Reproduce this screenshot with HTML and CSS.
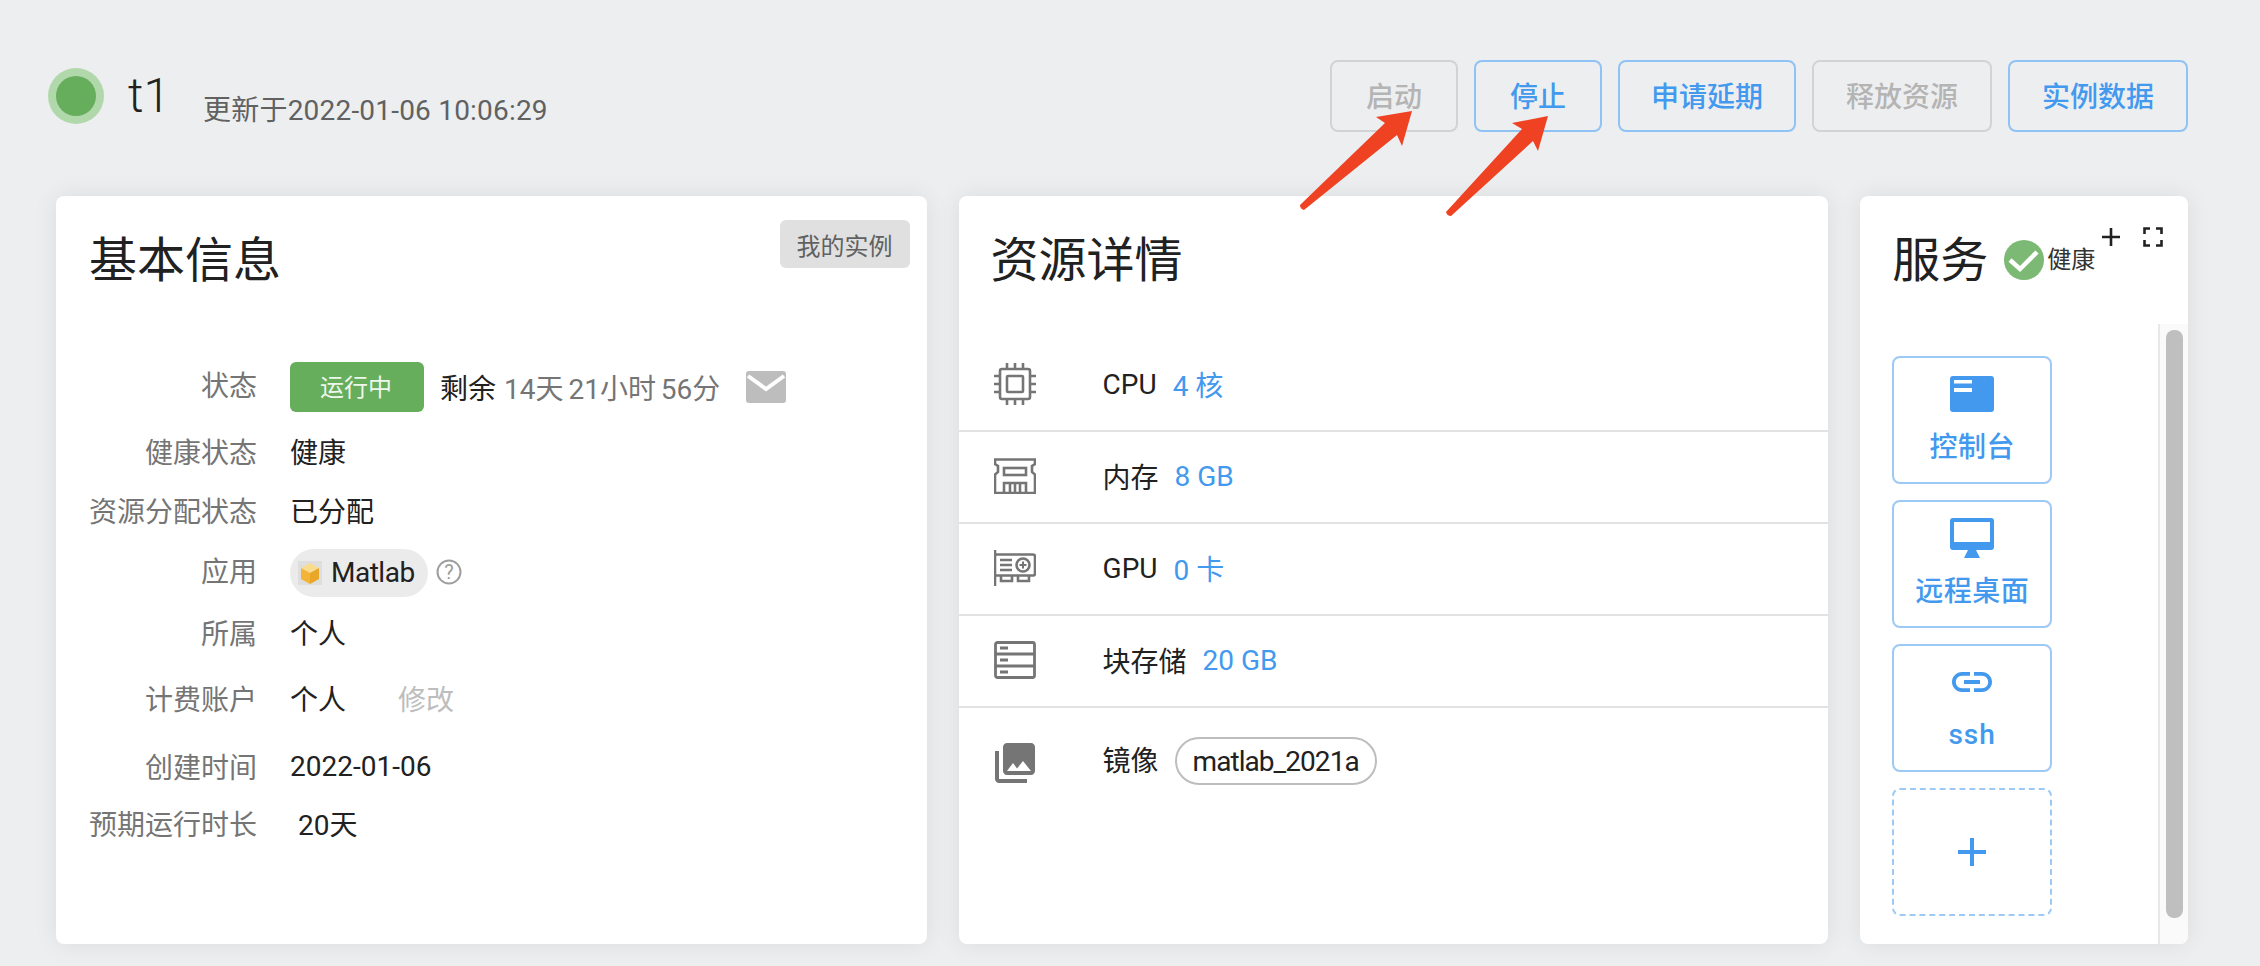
FILE: index.html
```html
<!DOCTYPE html>
<html lang="zh-CN">
<head>
<meta charset="utf-8">
<title>t1</title>
<link rel="stylesheet" href="styles.css">
</head>
<body>
<div class="page">
  <header class="top">
    <div class="status-dot"><span class="status-dot-inner"></span></div>
    <h1 class="name">t1</h1>
    <span class="updated">更新于2022-01-06 10:06:29</span>
    <div class="actions">
      <button class="btn btn-short btn-off">启动</button>
      <button class="btn btn-short">停止</button>
      <button class="btn btn-mid">申请延期</button>
      <button class="btn btn-off">释放资源</button>
      <button class="btn">实例数据</button>
    </div>
  </header>

  <main class="cards">
    <section class="card card-info">
      <div class="card-head">
        <h2 class="card-title">基本信息</h2>
        <button class="mine">我的实例</button>
      </div>
      <div class="info">
        <div class="lbl">状态</div>
        <div class="val">
          <span class="running">运行中</span>
          <span class="remain">剩余</span>
          <span class="remain-time">14天 21小时 56分</span>
          <svg class="mail" viewBox="0 0 40 32"><rect width="40" height="32" rx="3" fill="#bdbdbd"/><path d="M2 5 L20 18 L38 5" fill="none" stroke="#fff" stroke-width="4"/></svg>
        </div>
        <div class="lbl row-low">健康状态</div>
        <div class="val val-text row-low">健康</div>
        <div class="lbl">资源分配状态</div>
        <div class="val val-text">已分配</div>
        <div class="lbl">应用</div>
        <div class="val">
          <span class="app">
            <svg class="app-icon" viewBox="0 0 24 24"><rect x="0" y="0" width="24" height="24" fill="#dedede"/><path d="M3 7 L12 2 L21 7 L12 12Z" fill="#f9dc8e"/><path d="M3 7 L12 12 V23 L3 18Z" fill="#f3b437"/><path d="M21 7 L12 12 V23 L21 18Z" fill="#eaa626"/></svg>
            <span class="app-name">Matlab</span>
          </span>
          <svg class="help" viewBox="0 0 26 26"><circle cx="13" cy="13" r="11.5" fill="none" stroke="#9e9e9e" stroke-width="2"/><text x="13" y="20" text-anchor="middle" class="help-mark">?</text></svg>
        </div>
        <div class="lbl">所属</div>
        <div class="val val-text">个人</div>
        <div class="lbl">计费账户</div>
        <div class="val val-text">个人<span class="edit">修改</span></div>
        <div class="lbl lbl-date">创建时间</div>
        <div class="val val-date">2022-01-06</div>
        <div class="lbl">预期运行时长</div>
        <div class="val val-text"><span class="duration">20天</span></div>
      </div>
    </section>

    <section class="card card-res">
      <h2 class="card-title">资源详情</h2>
      <div class="res-list">
        <div class="res">
          <span class="res-icon">
            <svg width="42" height="42" viewBox="0 0 42 42" fill="none" stroke="#757575" stroke-width="2.6"><rect x="6" y="6" width="30" height="30" rx="2"/><rect x="13" y="13" width="16" height="16" rx="1"/><path d="M13 0v6M21 0v6M29 0v6M13 36v6M21 36v6M29 36v6M0 13h6M0 21h6M0 29h6M36 13h6M36 21h6M36 29h6"/></svg>
          </span>
          <span>CPU</span><span class="res-val">4 核</span>
        </div>
        <div class="res">
          <span class="res-icon">
            <svg width="42" height="36" viewBox="0 0 42 36" fill="none" stroke="#757575" stroke-width="2.6"><path d="M1 1.5H41V6L38 8V14L41 16.500V35H1V16.500L4 14V8L1 6Z"/><rect x="10" y="10" width="22" height="7"/><path d="M10 35V25H32V35M16 25V35M21 25V35M26 25V35"/></svg>
          </span>
          <span>内存</span><span class="res-val">8 GB</span>
        </div>
        <div class="res">
          <span class="res-icon">
            <svg width="42" height="36" viewBox="0 0 42 36" fill="none" stroke="#757575" stroke-width="2.6"><path d="M1 0V36M1 4.500H39Q41 4.500 41 6.500V23.500Q41 25.500 39 25.500H1"/><path d="M6 10H18M6 15H18M6 20H18"/><circle cx="29" cy="15" r="6.500"/><path d="M29 11.500V18.500M25.500 15H32.500" stroke-width="2"/><path d="M7 25.500V31H18V25.500M24 25.500V31H35V25.500"/></svg>
          </span>
          <span>GPU</span><span class="res-val">0 卡</span>
        </div>
        <div class="res">
          <span class="res-icon">
            <svg width="42" height="38" viewBox="0 0 42 38" fill="none" stroke="#757575" stroke-width="2.8"><rect x="1.500" y="1.500" width="39" height="35" rx="2"/><path d="M1.500 13H40.500M1.500 25H40.500"/><path d="M6 7H14M6 19H14M6 31H14"/></svg>
          </span>
          <span>块存储</span><span class="res-val">20 GB</span>
        </div>
        <div class="res res-last">
          <span class="res-icon">
            <svg class="res-image" width="48" height="48" viewBox="0 0 24 24" fill="#757575"><path d="M22 16V4c0-1.100-.9-2-2-2H8c-1.100 0-2 .9-2 2v12c0 1.100.9 2 2 2h12c1.100 0 2-.9 2-2zm-11-4l2.030 2.710L16 11l4 5H8l3-4zM2 6v14c0 1.100.9 2 2 2h14v-2H4V6H2z"/></svg>
          </span>
          <span class="res-name">镜像</span><span class="image-chip">matlab_2021a</span>
        </div>
      </div>
    </section>

    <section class="card card-svc">
      <div class="svc-head">
        <h2 class="card-title">服务</h2>
        <svg class="ok" viewBox="0 0 40 40"><circle cx="20" cy="20" r="20" fill="#7cb974"/><path d="M6 20 L16 29 L33 12" fill="none" stroke="#fff" stroke-width="4.500"/></svg>
        <span class="ok-text">健康</span>
        <div class="svc-tools">
          <svg width="20" height="20" viewBox="0 0 20 20"><path d="M10 1V19M1 10H19" stroke="#212121" stroke-width="2.600" fill="none"/></svg>
          <svg width="20" height="20" viewBox="0 0 20 20"><path d="M1.500 7V1.500H7M13 1.500H18.500V7M18.500 13V18.500H13M7 18.500H1.500V13" stroke="#212121" stroke-width="2.600" fill="none"/></svg>
        </div>
      </div>
      <div class="svc-body">
        <div class="svc-list">
          <div class="svc">
            <svg width="48" height="48" viewBox="0 0 48 48"><rect x="2" y="6" width="44" height="36" rx="3" fill="#4299ee"/><rect x="6" y="10" width="18" height="3.500" fill="#fff"/><rect x="6" y="18" width="18" height="4" fill="#fff"/></svg>
            <span class="svc-cjk">控制台</span>
          </div>
          <div class="svc">
            <svg width="48" height="48" viewBox="0 0 48 48"><rect x="2" y="4" width="44" height="32" rx="3" fill="#4299ee"/><rect x="6" y="8" width="36" height="20" fill="#fff"/><path d="M20 36 H28 L32 44 H16Z" fill="#4299ee"/></svg>
            <span class="svc-cjk">远程桌面</span>
          </div>
          <div class="svc">
            <svg width="48" height="48" viewBox="0 0 24 24" fill="#4299ee"><path d="M3.900 12c0-1.710 1.390-3.100 3.100-3.100h4V7H7c-2.760 0-5 2.240-5 5s2.240 5 5 5h4v-1.900H7c-1.710 0-3.100-1.390-3.100-3.100zM8 13h8v-2H8v2zm9-6h-4v1.900h4c1.710 0 3.100 1.390 3.100 3.100s-1.390 3.100-3.100 3.100h-4V17h4c2.760 0 5-2.240 5-5s-2.240-5-5-5z"/></svg>
            <span class="svc-ssh">ssh</span>
          </div>
          <div class="svc svc-add">
            <svg width="28" height="28" viewBox="0 0 28 28"><path d="M14 0V28M0 14H28" stroke="#4299ee" stroke-width="4" fill="none"/></svg>
          </div>
        </div>
        <div class="track"><div class="thumb"></div></div>
      </div>
    </section>
  </main>
</div>
<svg class="arrows" width="2260" height="966" viewBox="0 0 2260 966">
  <path d="M1412 111 L1376 117 L1385 123 L1300 205 Q1300 209 1304 210 L1397 135 L1402 146Z" fill="#ee4223"/>
  <path d="M1548 116 L1512 123 L1522 129 L1446 212 Q1447 216 1451 216 L1533 141 L1538 151Z" fill="#ee4223"/>
</svg>
</body>
</html>
```
FILE: styles.css
```css
* { box-sizing: border-box; }
html, body { margin: 0; padding: 0; }
body {
  background: #edeef0;
  font-family: Roboto, "Noto Sans CJK SC", sans-serif;
  font-size: 28px;
  color: #212121;
  overflow: hidden;
}
.page {
  width: 2260px;
  height: 966px;
  padding: 60px 72px 0 48px;
}
.top {
  display: flex;
  align-items: flex-start;
  height: 72px;
}
.status-dot {
  width: 56px;
  height: 56px;
  margin-top: 8px;
  border-radius: 50%;
  background: #b1d8ab;
  display: flex;
  align-items: center;
  justify-content: center;
}
.status-dot-inner {
  width: 40px;
  height: 40px;
  border-radius: 50%;
  background: #66ad5c;
}
.name {
  margin: 8px 0 0 24px;
  font-size: 48px;
  line-height: 56px;
  font-weight: 300;
}
.updated {
  margin: 31px 0 0 33px;
  line-height: 40px;
  color: #616161;
  letter-spacing: .2px;
}
.actions {
  margin-left: auto;
  display: flex;
  gap: 16px;
}
.btn {
  width: 180px;
  height: 72px;
  padding: 0 0 3px;
  background: transparent;
  border: 2px solid #90c3f5;
  border-radius: 8px;
  font-family: inherit;
  font-size: 28px;
  font-weight: 500;
  color: #4299ee;
}
.btn-short { width: 128px; }
.btn-mid { width: 178px; }
.btn-off {
  border-color: #d2d3d5;
  color: #b4b4b4;
}
.cards {
  display: flex;
  gap: 32px;
  margin: 64px 0 0 8px;
  height: 748px;
}
.card {
  background: #fff;
  border-radius: 8px;
  box-shadow: 0 0 24px rgba(0, 0, 0, .08);
  position: relative;
}
.card-info { width: 871px; }
.card-res { width: 870px; padding-top: 33px; }
.card-svc { width: 328px; overflow: hidden; }
.card-title {
  margin: 0;
  font-size: 48px;
  line-height: 64px;
  font-weight: 400;
  color: #212121;
}
.card-res .card-title { padding-left: 32px; }
.card-head {
  display: flex;
  justify-content: space-between;
  align-items: flex-start;
  padding: 33px 17px 0 33px;
}
.mine {
  width: 130px;
  height: 48px;
  margin-top: -9px;
  padding: 0;
  border: 0;
  border-radius: 6px;
  background: #e0e0e0;
  font-family: inherit;
  font-size: 24px;
  color: #616161;
}
.info {
  display: grid;
  grid-template-columns: 201px 1fr;
  grid-template-rows: 67px 63px 59px 61px 64px 67px 63px 58px;
  column-gap: 33px;
  align-items: center;
  margin-top: 60px;
}
.lbl {
  padding-bottom: 6px;
  text-align: right;
  color: #757575;
  white-space: nowrap;
}
.lbl-date { padding: 0; }
.val {
  display: flex;
  align-items: center;
}
.val-text { padding-bottom: 6px; }
.val-date { padding-top: 2px; }
.row-low { padding-bottom: 2px; }
.running {
  width: 134px;
  height: 50px;
  padding: 0 2px 2px 0;
  display: flex;
  align-items: center;
  justify-content: center;
  border-radius: 6px;
  background: #66ad5c;
  color: #eef7ec;
  font-size: 24px;
}
.remain { margin-left: 16px; }
.remain-time {
  margin-left: 8px;
  color: #757575;
  word-spacing: -2px;
}
.mail {
  width: 40px;
  height: 32px;
  margin-left: 26px;
}
.app {
  width: 138px;
  height: 48px;
  display: flex;
  align-items: center;
  gap: 9px;
  padding-left: 8px;
  border-radius: 24px;
  background: #ebebeb;
}
.app-icon { width: 24px; height: 24px; }
.app-name { letter-spacing: -.5px; }
.help {
  width: 26px;
  height: 26px;
  margin: -2px 0 0 8px;
}
.help-mark {
  font-size: 20px;
  fill: #9e9e9e;
}
.edit {
  margin-left: 52px;
  color: #bdbdbd;
}
.duration { margin-left: 8px; }
.res-list { margin-top: 47px; }
.res {
  height: 92px;
  padding-bottom: 2px;
  display: flex;
  align-items: center;
  border-bottom: 2px solid #e2e2e2;
}
.res-last {
  height: 108px;
  border-bottom: 0;
}
.res-icon {
  width: 144px;
  padding-left: 35px;
  display: flex;
  align-items: center;
}
.res-image { margin: 4px 0 0 -3px; }
.res-name { padding-bottom: 5px; }
.res-val {
  margin-left: 16px;
  color: #4299ee;
}
.image-chip {
  height: 48px;
  margin-left: 16px;
  padding: 0 16px;
  display: flex;
  align-items: center;
  border: 2px solid #bdbdbd;
  border-radius: 24px;
  letter-spacing: -.95px;
}
.svc-head {
  height: 128px;
  padding: 33px 0 0 32px;
  display: flex;
  align-items: flex-start;
}
.ok {
  width: 40px;
  height: 40px;
  margin: 11px 0 0 16px;
}
.ok-text {
  margin: 15px 0 0 3px;
  font-size: 24px;
  line-height: 32px;
  color: #333;
}
.svc-tools {
  display: flex;
  gap: 22px;
  margin: -2px 0 0 6px;
}
.svc-body {
  display: flex;
  justify-content: space-between;
  height: 620px;
}
.svc-list {
  padding: 32px 0 0 32px;
  display: flex;
  flex-direction: column;
  gap: 16px;
}
.svc {
  width: 160px;
  height: 128px;
  padding-top: 12px;
  display: flex;
  flex-direction: column;
  align-items: center;
  border: 2px solid #9cc9f6;
  border-radius: 8px;
  color: #4299ee;
  font-weight: 500;
}
.svc-cjk {
  margin-top: 10px;
  line-height: 40px;
  letter-spacing: .5px;
}
.svc-ssh {
  margin-top: 9px;
  line-height: 40px;
  letter-spacing: 1px;
}
.svc-add {
  padding-top: 0;
  justify-content: center;
  border-style: dashed;
}
.track {
  width: 30px;
  padding: 6px 5px 0 6px;
  background: #fafafa;
  border-left: 2px solid #e8e8e8;
}
.thumb {
  height: 588px;
  border-radius: 8px;
  background: #bfbfbf;
}
.arrows {
  position: absolute;
  left: 0;
  top: 0;
  pointer-events: none;
}
```
